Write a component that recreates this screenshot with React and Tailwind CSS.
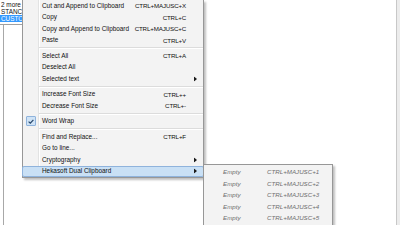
import React from 'react';

const font = { fontFamily: '"Liberation Sans", Arial, sans-serif' };

const Arrow = () => (
  <svg width="3" height="5" viewBox="0 0 3 5" className="block">
    <path d="M0 0 L3 2.5 L0 5 Z" fill="#1a1a1a" />
  </svg>
);

const Item = ({ label, shortcut, sub, active, checked }) => (
  <div
    className={
      'relative flex items-center h-[11.5px] ' +
      (active ? 'bg-[#c9e0f5] border border-[#8fb3dc] rounded-[2px] -mx-px' : '')
    }
  >
    <div className="w-[15px] h-full flex items-center justify-center shrink-0">
      {checked && (
        <div className="w-[10px] h-[10px] bg-[#cfe3f6] border border-[#8fb3dc] rounded-[1px] flex items-center justify-center">
          <svg width="6" height="5" viewBox="0 0 6 5">
            <path d="M0.6 2.6 L2.3 4.2 L5.4 0.8" stroke="#27476b" strokeWidth="1.2" fill="none" />
          </svg>
        </div>
      )}
    </div>
    <span className="ml-[4px] text-[6.4px] text-[#111] flex-1 whitespace-nowrap">{label}</span>
    {shortcut && (
      <span className="text-[6.2px] tracking-[-0.15px] text-[#111] whitespace-nowrap mr-[17px]">{shortcut}</span>
    )}
    {sub && (
      <span className="absolute right-[6px] top-1/2 -translate-y-1/2">
        <Arrow />
      </span>
    )}
  </div>
);

const Sep = () => (
  <div className="h-[4px] flex flex-col justify-center pl-[16px]">
    <div className="h-px bg-[#dcdcdc]" />
    <div className="h-px bg-white" />
  </div>
);

const SubItem = ({ n }) => (
  <div className="flex items-center h-[11.5px] text-[6.2px] italic text-[#6f6f6f] whitespace-nowrap">
    <span className="ml-[19px] w-[44px]">Empty</span>
    <span>CTRL+MAJUSC+{n}</span>
  </div>
);

export default function App() {
  return (
    <div className="relative w-[400px] h-[225px] overflow-hidden bg-white" style={font}>
      {/* background window */}
      <div className="flex h-full">
        <div className="w-[203px] h-full flex flex-col">
          <div className="w-[23px] h-[25px] border-r border-b border-[#a0a0a0] text-[6.4px] leading-[7px] pt-[1px]">
            <div className="pl-[1px] text-[#111]">2 more</div>
            <div className="pl-[1px] text-[#111]">STANC</div>
            <div className="pl-[1px] bg-[#3399ff] text-white">CUSTO</div>
          </div>
          <div className="flex-1 ml-[3px] border-l border-[#a8a8a8]" />
        </div>
        <div className="flex-1 border-l border-[#a0a0a0] bg-white" />
        <div className="w-[4px] border-l border-[#c8c8c8] bg-[#ececec]" />
      </div>

      {/* context menu */}
      <div className="absolute left-[22px] top-[0px] w-[182px] h-[178px] bg-[#f3f3f3] border border-t-0 border-[#979797] shadow-[2px_2px_2px_rgba(0,0,0,0.25)]">
        <div className="absolute left-[15px] top-0 bottom-0 w-px bg-[#e2e3e3]" />
        <div className="absolute left-[16px] top-0 bottom-0 w-px bg-white" />
        <div className="relative">
          <Item label="Cut and Append to Clipboard" shortcut="CTRL+MAJUSC+X" />
          <Item label="Copy" shortcut="CTRL+C" />
          <Item label="Copy and Append to Clipboard" shortcut="CTRL+MAJUSC+C" />
          <Item label="Paste" shortcut="CTRL+V" />
          <Sep />
          <Item label="Select All" shortcut="CTRL+A" />
          <Item label="Deselect All" />
          <Item label="Selected text" sub />
          <Sep />
          <Item label="Increase Font Size" shortcut="CTRL++" />
          <Item label="Decrease Font Size" shortcut="CTRL+-" />
          <Sep />
          <Item label="Word Wrap" checked />
          <Sep />
          <Item label="Find and Replace..." shortcut="CTRL+F" />
          <Item label="Go to line..." />
          <Item label="Cryptography" sub />
          <Item label="Hekasoft Dual Clipboard" sub active />
        </div>
      </div>

      {/* submenu */}
      <div className="absolute left-[203px] top-[164px] w-[130px] h-[70px] bg-[#f3f3f3] border border-[#979797] pt-[1px] shadow-[2px_2px_2px_rgba(0,0,0,0.25)]">
        <SubItem n="1" />
        <SubItem n="2" />
        <SubItem n="3" />
        <SubItem n="4" />
        <SubItem n="5" />
      </div>
    </div>
  );
}
